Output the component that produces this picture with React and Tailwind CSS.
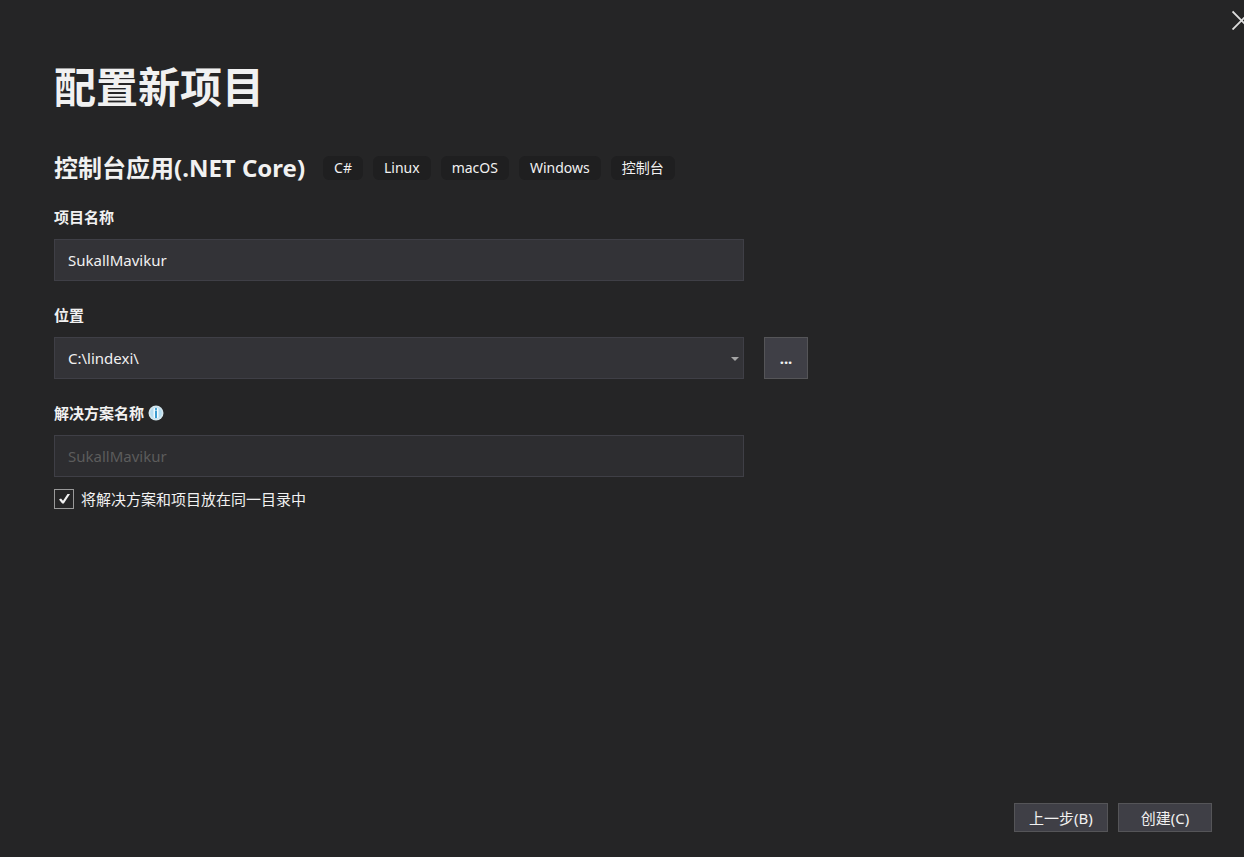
import React, { useState } from "react";

const tags = ["C#", "Linux", "macOS", "Windows", "控制台"];
const locations = ["C:\\lindexi\\"];

const CloseIcon = () => (
  <svg width="20" height="20" viewBox="0 0 20 20" fill="none" aria-hidden="true">
    <path d="M0.5 1.5L18.5 19.5M18.5 1.5L0.5 19.5" stroke="#dcdcdc" strokeWidth="1.9" />
  </svg>
);

const InfoIcon = () => (
  <svg width="16" height="16" viewBox="0 0 16 16" role="img" aria-label="信息">
    <circle cx="8" cy="8" r="7.5" fill="#d3e6ee" />
    <circle cx="8" cy="8" r="5.8" fill="#b4dcf0" />
    <rect x="5.5" y="3" width="5" height="10" rx="1" fill="#f2fafd" />
    <rect x="7" y="3" width="2" height="2" fill="#4ba6d6" />
    <rect x="7" y="5.5" width="2" height="7.5" fill="#3b9bd0" />
  </svg>
);

const Field = ({ id, label, icon, children }) => (
  <div>
    <div className="flex h-5 items-center gap-1">
      <label htmlFor={id} className="text-[15px] leading-5 font-bold">
        {label}
      </label>
      {icon}
    </div>
    <div className="mt-3">{children}</div>
  </div>
);

const FooterButton = ({ children }) => (
  <button
    type="button"
    className="h-[29px] w-[94px] border border-[#555558] bg-[#3f3f46] text-[15px] leading-5 hover:bg-[#4a4a52]"
  >
    {children}
  </button>
);

const App = () => {
  const [projectName, setProjectName] = useState("SukallMavikur");
  const [location, setLocation] = useState(locations[0]);
  const [sameFolder, setSameFolder] = useState(true);

  return (
    <div className="flex min-h-screen flex-col overflow-hidden bg-[#252526] font-['Noto_Sans','Noto_Sans_CJK_SC',sans-serif] text-[#f1f1f1]">
      <header className="flex h-10 items-center justify-end">
        <button type="button" aria-label="关闭" className="-mr-2">
          <CloseIcon />
        </button>
      </header>

      <main className="flex-1 px-[54px] pt-4">
        <h1 className="text-[42px] leading-[62px] font-bold">配置新项目</h1>

        <div className="mt-[34px] flex items-center gap-[18px]">
          <h2 className="text-2xl font-bold whitespace-nowrap">
            控制台应用(.NET Core)
          </h2>
          <ul className="flex gap-2.5">
            {tags.map((tag) => (
              <li
                key={tag}
                className="rounded-md bg-[#1f1f20] px-[11px] text-sm leading-6"
              >
                {tag}
              </li>
            ))}
          </ul>
        </div>

        <form className="mt-[23px] flex flex-col gap-6">
          <Field id="project-name" label="项目名称">
            <input
              id="project-name"
              type="text"
              value={projectName}
              onChange={(e) => setProjectName(e.target.value)}
              className="h-[42px] w-full max-w-[690px] border border-[#3f3f46] bg-[#333337] px-[13px] text-[15px] outline-none"
            />
          </Field>

          <Field id="location" label="位置">
            <div className="flex gap-5">
              <div className="relative w-full max-w-[690px]">
                <select
                  id="location"
                  value={location}
                  onChange={(e) => setLocation(e.target.value)}
                  className="h-[42px] w-full appearance-none border border-[#3f3f46] bg-[#333337] px-[13px] text-[15px] outline-none"
                >
                  {locations.map((path) => (
                    <option key={path}>{path}</option>
                  ))}
                </select>
                <svg
                  width="8"
                  height="4"
                  viewBox="0 0 8 4"
                  className="pointer-events-none absolute top-5 right-[5px]"
                  aria-hidden="true"
                >
                  <path d="M0 0H8L4 4Z" fill="#a5a5a5" />
                </svg>
              </div>
              <button
                type="button"
                aria-label="浏览"
                className="h-[42px] w-11 shrink-0 border border-[#555558] bg-[#3f3f46] text-[15px] font-bold hover:bg-[#4a4a52]"
              >
                ...
              </button>
            </div>
          </Field>

          <Field id="solution-name" label="解决方案名称" icon={<InfoIcon />}>
            <input
              id="solution-name"
              type="text"
              value={projectName}
              disabled={sameFolder}
              readOnly
              className="h-[42px] w-full max-w-[690px] border border-[#3f3f46] bg-[#2d2d30] px-[13px] text-[15px] outline-none disabled:text-[#5c5c5c]"
            />
            <label className="mt-3 flex items-center gap-[7px] text-[15px] leading-5">
              <span className="grid">
                <input
                  type="checkbox"
                  checked={sameFolder}
                  onChange={(e) => setSameFolder(e.target.checked)}
                  className="peer col-start-1 row-start-1 size-5 appearance-none border border-[#999999] bg-[#252526]"
                />
                <svg
                  width="20"
                  height="20"
                  viewBox="0 0 20 20"
                  className="pointer-events-none invisible col-start-1 row-start-1 peer-checked:visible"
                  aria-hidden="true"
                >
                  <path d="M5 10.5L7 9.5L9 11.8L13.5 5H16L9.8 14.5H8.2Z" fill="#f1f1f1" />
                </svg>
              </span>
              将解决方案和项目放在同一目录中
            </label>
          </Field>
        </form>
      </main>

      <footer className="flex justify-end gap-2.5 px-8 pb-[25px]">
        <FooterButton>上一步(B)</FooterButton>
        <FooterButton>创建(C)</FooterButton>
      </footer>
    </div>
  );
};

export default App;
